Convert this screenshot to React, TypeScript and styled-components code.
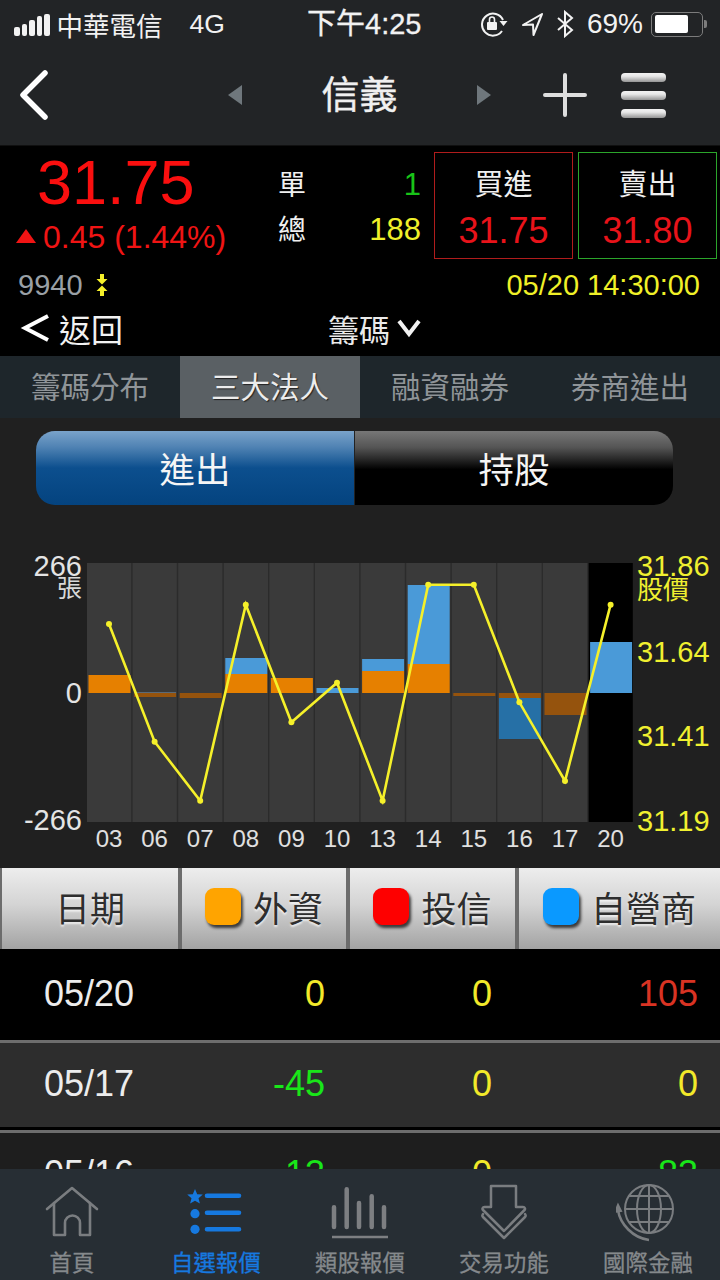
import React from 'react';
import styled, { createGlobalStyle } from 'styled-components';

const GlobalStyle = createGlobalStyle`
  html, body {
    margin: 0;
    padding: 0;
    background: #202020;
  }
  body {
    font-family: 'Liberation Sans', 'Noto Sans CJK TC', sans-serif;
  }
`;

const Page = styled.div`
  width: 720px;
  height: 1280px;
  display: flex;
  flex-direction: column;
  overflow: hidden;
  background: #202020;
`;

/* status bar */
const StatusBar = styled.div`
  height: 48px;
  flex: none;
  display: flex;
  align-items: center;
  background: #222426;
  color: #f2f2f2;
  font-size: 26.5px;
  padding: 0 17px 0 14px;
  position: relative;
`;

const SignalBars = styled.div`
  display: flex;
  align-items: flex-end;
  gap: 2px;
  height: 24px;
  margin-right: 7px;
`;

const SignalBar = styled.span<{ $h: number }>`
  width: 5.5px;
  height: ${(p) => p.$h}px;
  background: #f2f2f2;
  border-radius: 2px;
`;

const Carrier = styled.span`
  width: 133px;
`;

const Clock = styled.span`
  position: absolute;
  left: 307px;
  top: 3px;
  font-size: 29px;
  line-height: 42px;
  -webkit-text-stroke: 0.3px #f2f2f2;
`;

const StatusRight = styled.div`
  margin-left: auto;
  display: flex;
  align-items: center;
`;

const LocationIcon = styled.svg`
  margin-left: 12px;
`;

const BluetoothIcon = styled.svg`
  margin-left: 12px;
`;

const BatteryPercent = styled.span`
  margin-left: 13px;
  font-size: 28px;
`;

const Battery = styled.div`
  width: 52px;
  height: 25px;
  box-sizing: border-box;
  border: 1.5px solid #7c7c7c;
  border-radius: 5px;
  padding: 2.5px;
  margin-left: 8px;
  position: relative;
  &::after {
    content: '';
    position: absolute;
    right: -5px;
    top: 7px;
    width: 3px;
    height: 8px;
    background: #7c7c7c;
    border-radius: 0 2px 2px 0;
  }
`;

const BatteryFill = styled.div`
  width: 33px;
  height: 100%;
  background: #fff;
  border-radius: 2px;
`;

/* nav bar */
const NavBar = styled.div`
  height: 98px;
  flex: none;
  display: flex;
  align-items: center;
  background: #222426;
  padding-bottom: 3px;
  box-sizing: border-box;
  border-bottom: 1px solid #101010;
`;

const NavBack = styled.svg`
  margin-left: 18px;
  margin-right: 178px;
  width: 32px;
  height: 50px;
`;

const NavArrow = styled.div<{ $right?: boolean }>`
  width: 0;
  height: 0;
  border-top: 10px solid transparent;
  border-bottom: 10px solid transparent;
  ${(p) =>
    p.$right
      ? 'border-left: 14px solid #6f777c;'
      : 'border-right: 14px solid #6f777c;'}
`;

const NavTitle = styled.div`
  width: 235px;
  text-align: center;
  font-size: 38px;
  line-height: 50px;
  color: #f0f0f0;
  -webkit-text-stroke: 0.4px #f0f0f0;
`;

const PlusIcon = styled.svg`
  width: 44px;
  height: 44px;
  margin-left: 52px;
`;

const Hamburger = styled.div`
  width: 45px;
  margin-left: 34px;
  display: flex;
  flex-direction: column;
  gap: 9px;
`;

const HamburgerBar = styled.div`
  height: 9px;
  border-radius: 4px;
  background: linear-gradient(#f2f2f2 0%, #e8e8e8 35%, #949494 100%);
`;

/* quote panel */
const QuotePanel = styled.div`
  height: 210px;
  flex: none;
  background: #000;
  display: flex;
  flex-direction: column;
  box-sizing: border-box;
  padding-top: 6px;
`;

const QuoteTop = styled.div`
  display: flex;
  height: 107px;
`;

const PriceBlock = styled.div`
  width: 278px;
  flex: none;
  box-sizing: border-box;
  padding-left: 16px;
  color: #fa0f0f;
`;

const BigPrice = styled.div`
  font-size: 63px;
  line-height: 66px;
  margin: -3px 0 0 21px;
`;

const ChangeRow = styled.div`
  display: flex;
  align-items: center;
  font-size: 32px;
  line-height: 38px;
  margin-top: 3px;
  gap: 7px;
  color: #f01414;
`;

const UpTriangle = styled.span`
  width: 0;
  height: 0;
  border-left: 10px solid transparent;
  border-right: 10px solid transparent;
  border-bottom: 14px solid #f01414;
  margin-top: -2px;
`;

const StatsBlock = styled.div`
  width: 143px;
  flex: none;
  display: flex;
  flex-direction: column;
  gap: 7px;
  padding-top: 12px;
`;

const StatRow = styled.div`
  display: flex;
  align-items: center;
  justify-content: space-between;
  height: 38px;
`;

const StatLabel = styled.span`
  font-size: 28px;
  color: #f0f0f0;
`;

const StatValue = styled.span<{ $color: string }>`
  font-size: 31px;
  margin-top: 3px;
  color: ${(p) => p.$color};
`;

const QuoteBox = styled.div<{ $border: string; $gap: number }>`
  width: 139px;
  height: 107px;
  flex: none;
  box-sizing: border-box;
  border: 1.5px solid ${(p) => p.$border};
  margin-left: ${(p) => p.$gap}px;
  display: flex;
  flex-direction: column;
  align-items: center;
  padding-top: 12px;
`;

const BoxLabel = styled.div`
  font-size: 29px;
  line-height: 40px;
  color: #f0f0f0;
`;

const BoxPrice = styled.div`
  font-size: 36px;
  line-height: 42px;
  margin-top: 5px;
  color: #e8131a;
`;

const MetaRow = styled.div`
  display: flex;
  align-items: center;
  height: 36px;
  margin-top: 8px;
  padding: 0 18px;
  font-size: 29px;
`;

const StockCode = styled.span`
  color: #9aa0a6;
`;

const TickIcon = styled.svg`
  width: 12px;
  height: 22px;
  margin-left: 13px;
`;

const TimeStamp = styled.span`
  margin-left: auto;
  margin-right: 2px;
  color: #f0f028;
`;

const ReturnRow = styled.div`
  display: flex;
  align-items: center;
  height: 48px;
  margin-top: 1px;
`;

const ReturnChevron = styled.svg`
  width: 30px;
  height: 30px;
  margin-left: 20px;
`;

const ReturnLabel = styled.span`
  margin-left: 9px;
  font-size: 32px;
  color: #f2f2f2;
`;

const PickerLabel = styled.span`
  margin-left: 205px;
  font-size: 31px;
  color: #eaeaea;
`;

const PickerChevron = styled.svg`
  width: 26px;
  height: 20px;
  margin-left: 6px;
`;

/* tabs */
const TabStrip = styled.div`
  height: 62px;
  flex: none;
  display: grid;
  grid-template-columns: repeat(4, 180px);
  background: #1e262b;
`;

const Tab = styled.div<{ $active?: boolean }>`
  display: flex;
  align-items: center;
  justify-content: center;
  padding-bottom: 4px;
  font-size: 29.5px;
  color: ${(p) => (p.$active ? '#ececec' : '#8f9498')};
  background: ${(p) => (p.$active ? '#5a6064' : 'transparent')};
  text-shadow: ${(p) => (p.$active ? '1px 1px 1px #222' : 'none')};
`;

/* segment */
const Content = styled.div`
  flex: 1;
  min-height: 0;
  overflow: hidden;
  background: #202020;
  padding-top: 13px;
`;

const Segment = styled.div`
  width: 637px;
  height: 74px;
  margin-left: 36px;
  display: flex;
  border-radius: 19px;
  overflow: hidden;
`;

const SegmentItem = styled.div<{ $active?: boolean }>`
  flex: ${(p) => (p.$active ? '0 0 318px' : '1')};
  display: flex;
  align-items: center;
  justify-content: center;
  padding-bottom: 2px;
  font-size: 35.5px;
  color: #f5f5f5;
  border-left: ${(p) => (p.$active ? 'none' : '1.5px solid #222')};
  background: ${(p) =>
    p.$active
      ? 'linear-gradient(#7aa3ca 0%, #4f82b3 22%, #0c4f8e 50%, #04437f 100%)'
      : 'linear-gradient(#777 0%, #555 22%, #000 52%, #000 100%)'};
`;

const ChartBox = styled.svg`
  display: block;
  width: 720px;
  height: 320px;
  margin-top: 40px;
`;

/* table */
const TableHead = styled.div`
  display: grid;
  grid-template-columns: 176px 164px 165px 1fr;
  column-gap: 4px;
  height: 81px;
  margin-top: 3px;
  padding-left: 2px;
  background: #6c6c6c;
`;

const HeadCell = styled.div`
  display: flex;
  align-items: center;
  justify-content: center;
  gap: 12px;
  padding-bottom: 5px;
  font-size: 35px;
  color: #2e2e2e;
  text-shadow: 0 2px 2px rgba(255, 255, 255, 0.75);
  background: linear-gradient(#ededed 0%, #d4d4d4 45%, #a3a3a3 100%);
`;

const Swatch = styled.span<{ $color: string }>`
  width: 36px;
  height: 37px;
  border-radius: 9px;
  background: ${(p) => p.$color};
  box-shadow: 2px 3px 3px rgba(0, 0, 0, 0.7);
`;

const Row = styled.div<{ $bg: string; $first?: boolean }>`
  display: grid;
  grid-template-columns: 178px 147px 167px 206px;
  align-items: center;
  height: ${(p) => (p.$first ? '91px' : '90px')};
  box-sizing: border-box;
  padding-bottom: ${(p) => (p.$first ? '2px' : '6px')};
  font-size: 36px;
  background: ${(p) => p.$bg};
  border-top: ${(p) => (p.$first ? 'none' : '3px solid #6d6d6d')};
  box-shadow: ${(p) => (p.$first ? 'none' : 'inset 0 -3px 0 #000')};
`;

const DateCell = styled.span`
  text-align: center;
  color: #ececec;
`;

const ValueCell = styled.span<{ $color: string }>`
  text-align: right;
  color: ${(p) => p.$color};
`;

/* bottom tabs */
const BottomBar = styled.div`
  height: 111px;
  flex: none;
  display: grid;
  grid-template-columns: repeat(5, 144px);
  background: #272e34;
`;

const BottomItem = styled.div<{ $active?: boolean }>`
  display: flex;
  flex-direction: column;
  align-items: center;
  padding-top: 15px;
  color: ${(p) => (p.$active ? '#1679e0' : '#85898c')};
`;

const BottomIcon = styled.svg`
  width: 64px;
  height: 60px;
  flex: none;
`;

const BottomLabel = styled.span`
  font-size: 22.3px;
  line-height: 30px;
  margin-top: 5px;
  letter-spacing: 0.2px;
  -webkit-text-stroke: 0.3px currentColor;
`;

const columns = [
  { label: '03', bars: [{ y: 675, h: 18, c: '#e68000' }] },
  { label: '06', bars: [{ y: 692, h: 1, c: '#5a6a78' }, { y: 693, h: 4, c: '#95530d' }] },
  { label: '07', bars: [{ y: 693, h: 5, c: '#95530d' }] },
  { label: '08', bars: [{ y: 658, h: 16, c: '#4a9ad8' }, { y: 674, h: 19, c: '#e68000' }] },
  { label: '09', bars: [{ y: 678, h: 15, c: '#e68000' }] },
  { label: '10', bars: [{ y: 688, h: 5, c: '#4a9ad8' }] },
  { label: '13', bars: [{ y: 659, h: 12, c: '#4a9ad8' }, { y: 671, h: 22, c: '#e68000' }] },
  { label: '14', bars: [{ y: 585, h: 79, c: '#4a9ad8' }, { y: 664, h: 29, c: '#e68000' }] },
  { label: '15', bars: [{ y: 693, h: 3, c: '#95530d' }] },
  { label: '16', bars: [{ y: 693, h: 5, c: '#95530d' }, { y: 698, h: 41, c: '#2670a6' }] },
  { label: '17', bars: [{ y: 693, h: 22, c: '#95530d' }] },
  { label: '20', bars: [{ y: 642, h: 51, c: '#4a9ad8' }] },
];

const pricePoints = [624, 741.7, 800.7, 604.7, 722.3, 682.7, 800.7, 584.7, 584.7, 702.3, 781, 604.7];

const leftAxis = [
  { text: '266', y: 576 },
  { text: '0', y: 702.5 },
  { text: '-266', y: 830 },
];

const rightAxis = [
  { text: '31.86', y: 576 },
  { text: '31.64', y: 661.5 },
  { text: '31.41', y: 746 },
  { text: '31.19', y: 830.5 },
];

const rows = [
  { date: '05/20', a: ['0', '#f2e92a'], b: ['0', '#f2e92a'], c: ['105', '#d93323'], bg: '#000' },
  { date: '05/17', a: ['-45', '#19e619'], b: ['0', '#f2e92a'], c: ['0', '#f2e92a'], bg: '#2d2d2d' },
  { date: '05/16', a: ['-13', '#19e619'], b: ['0', '#f2e92a'], c: ['-83', '#19e619'], bg: '#1e1e1e' },
];

function colX(i: number) {
  return 87 + i * 45.6;
}

function Chart() {
  const line = pricePoints.map((y, i) => `${colX(i) + 22},${y}`).join(' ');
  return (
    <ChartBox viewBox="0 545 720 320">
      <rect x={87} y={563} width={502} height={259} fill="#2b2b2b" />
      {columns.map((col, i) => (
        <g key={col.label}>
          <rect x={colX(i)} y={563} width={44.2} height={259} fill={i === 11 ? '#000' : '#3a3a3a'} />
          {col.bars.map((b) => (
            <rect key={b.y} x={colX(i) + 1.5} y={b.y} width={42} height={b.h} fill={b.c} />
          ))}
          <text x={colX(i) + 22} y={847} fontSize={24} fill="#e0e0e0" textAnchor="middle">
            {col.label}
          </text>
        </g>
      ))}
      <polyline points={line} fill="none" stroke="#f5f02a" strokeWidth={2.6} />
      {pricePoints.map((y, i) => (
        <circle key={i} cx={colX(i) + 22} cy={y} r={3} fill="#f5f02a" />
      ))}
      {leftAxis.map((t) => (
        <text key={t.text} x={82} y={t.y} fontSize={29} fill="#e4e4e4" textAnchor="end">
          {t.text}
        </text>
      ))}
      <text x={82} y={597} fontSize={25} fill="#d8d8d8" textAnchor="end">
        張
      </text>
      {rightAxis.map((t) => (
        <text key={t.text} x={637} y={t.y} fontSize={29} fill="#f0f030">
          {t.text}
        </text>
      ))}
      <text x={637} y={599} fontSize={26} fill="#f0f030">
        股價
      </text>
    </ChartBox>
  );
}

export default function App() {
  return (
    <Page>
      <GlobalStyle />
      <StatusBar>
        <SignalBars>
          <SignalBar $h={9} />
          <SignalBar $h={12} />
          <SignalBar $h={16} />
          <SignalBar $h={20} />
          <SignalBar $h={22} />
        </SignalBars>
        <Carrier>中華電信</Carrier>
        <span>4G</span>
        <Clock>下午4:25</Clock>
        <StatusRight>
          <svg width="28" height="26" viewBox="0 0 28 26" fill="none" stroke="#f2f2f2">
            <path d="M22 20a11 11 0 1 1 1-11" strokeWidth="2" />
            <path d="M19.500 10l4 5 4-5z" fill="#f2f2f2" stroke="none" />
            <rect x="7" y="11" width="10" height="8" rx="1" fill="#f2f2f2" stroke="none" />
            <path d="M9.500 11V8.500a2.500 2.500 0 0 1 5 0V11" strokeWidth="1.6" />
          </svg>
          <LocationIcon width="24" height="26" viewBox="0 0 24 26" fill="none" stroke="#f2f2f2" strokeWidth="2">
            <path d="M22 3L3 14l10-.5.500 10.500z" strokeLinejoin="round" />
          </LocationIcon>
          <BluetoothIcon width="18" height="28" viewBox="0 0 18 28" fill="none" stroke="#f2f2f2" strokeWidth="2">
            <path d="M2 8l14 12-7 6V2l7 6L2 20" />
          </BluetoothIcon>
          <BatteryPercent>69%</BatteryPercent>
          <Battery>
            <BatteryFill />
          </Battery>
        </StatusRight>
      </StatusBar>

      <NavBar>
        <NavBack viewBox="0 0 32 50" fill="none" stroke="#fff" strokeWidth="5.5" strokeLinecap="round" strokeLinejoin="round">
          <path d="M27 3L5 25l22 22" />
        </NavBack>
        <NavArrow />
        <NavTitle>信義</NavTitle>
        <NavArrow $right />
        <PlusIcon viewBox="0 0 44 44" stroke="#dedede" strokeWidth="4" strokeLinecap="round">
          <path d="M22 2v40M2 22h40" />
        </PlusIcon>
        <Hamburger>
          <HamburgerBar />
          <HamburgerBar />
          <HamburgerBar />
        </Hamburger>
      </NavBar>

      <QuotePanel>
        <QuoteTop>
          <PriceBlock>
            <BigPrice>31.75</BigPrice>
            <ChangeRow>
              <UpTriangle />
              <span>0.45 (1.44%)</span>
            </ChangeRow>
          </PriceBlock>
          <StatsBlock>
            <StatRow>
              <StatLabel>單</StatLabel>
              <StatValue $color="#18c418">1</StatValue>
            </StatRow>
            <StatRow>
              <StatLabel>總</StatLabel>
              <StatValue $color="#f0f02a">188</StatValue>
            </StatRow>
          </StatsBlock>
          <QuoteBox $border="#b01c1c" $gap={13}>
            <BoxLabel>買進</BoxLabel>
            <BoxPrice>31.75</BoxPrice>
          </QuoteBox>
          <QuoteBox $border="#2ba52b" $gap={5}>
            <BoxLabel>賣出</BoxLabel>
            <BoxPrice>31.80</BoxPrice>
          </QuoteBox>
        </QuoteTop>
        <MetaRow>
          <StockCode>9940</StockCode>
          <TickIcon viewBox="0 0 12 22" fill="#f5f02a">
            <path d="M4 0h4v5h3.500L6 10.500 .5 5H4zM6 11.500L11.500 17H8v5H4v-5H.5z" />
          </TickIcon>
          <TimeStamp>05/20 14:30:00</TimeStamp>
        </MetaRow>
        <ReturnRow>
          <ReturnChevron viewBox="0 0 30 30" fill="none" stroke="#fff" strokeWidth="4">
            <path d="M28 3L5 15l23 12" />
          </ReturnChevron>
          <ReturnLabel>返回</ReturnLabel>
          <PickerLabel>籌碼</PickerLabel>
          <PickerChevron viewBox="0 0 26 20" fill="none" stroke="#f2f2f2" strokeWidth="4">
            <path d="M3 3l10 13L23 3" />
          </PickerChevron>
        </ReturnRow>
      </QuotePanel>

      <TabStrip>
        <Tab>籌碼分布</Tab>
        <Tab $active>三大法人</Tab>
        <Tab>融資融券</Tab>
        <Tab>券商進出</Tab>
      </TabStrip>

      <Content>
        <Segment>
          <SegmentItem $active>進出</SegmentItem>
          <SegmentItem>持股</SegmentItem>
        </Segment>
        <Chart />
        <TableHead>
          <HeadCell>日期</HeadCell>
          <HeadCell>
            <Swatch $color="#ffa400" />
            外資
          </HeadCell>
          <HeadCell>
            <Swatch $color="#fe0000" />
            投信
          </HeadCell>
          <HeadCell>
            <Swatch $color="#0a99ff" />
            自營商
          </HeadCell>
        </TableHead>
        {rows.map((r, i) => (
          <Row key={r.date} $bg={r.bg} $first={i === 0}>
            <DateCell>{r.date}</DateCell>
            <ValueCell $color={r.a[1]}>{r.a[0]}</ValueCell>
            <ValueCell $color={r.b[1]}>{r.b[0]}</ValueCell>
            <ValueCell $color={r.c[1]}>{r.c[0]}</ValueCell>
          </Row>
        ))}
      </Content>

      <BottomBar>
        <BottomItem>
          <BottomIcon viewBox="0 0 64 60" fill="none" stroke="#7a7d80" strokeWidth="2.6" strokeLinecap="round" strokeLinejoin="round">
            <path d="M7 25L32 4l25 21" />
            <path d="M14 19v32h11V39a7.500 7.500 0 0 1 15 0v12h10V19" />
          </BottomIcon>
          <BottomLabel>首頁</BottomLabel>
        </BottomItem>
        <BottomItem $active>
          <BottomIcon viewBox="0 0 64 60" fill="#1679e0" stroke="none">
            <path d="M11 5l2.200 5.200 5.600.4-4.300 3.600 1.400 5.400L11 16.700l-4.900 2.900 1.400-5.400-4.300-3.600 5.600-.4z" />
            <circle cx="11" cy="29.700" r="4.600" />
            <circle cx="11" cy="45.300" r="4.600" />
            <g stroke="#1679e0" strokeWidth="4.600" strokeLinecap="round">
              <path d="M23 11.700h32M23 28.700h32M23 45.300h32" />
            </g>
          </BottomIcon>
          <BottomLabel>自選報價</BottomLabel>
        </BottomItem>
        <BottomItem>
          <BottomIcon viewBox="0 0 64 60" fill="none" stroke="#7d7f82" strokeLinecap="round">
            <path d="M6 23.300V43M18.700 5.300V43M31 19V43M43.700 12.300V43M56 23.300V43" strokeWidth="4.500" />
            <path d="M4 53h56" strokeWidth="2.500" strokeLinecap="butt" />
          </BottomIcon>
          <BottomLabel>類股報價</BottomLabel>
        </BottomItem>
        <BottomItem>
          <BottomIcon viewBox="0 0 64 60" fill="none" stroke="#7a7d80" strokeWidth="2.500" strokeLinejoin="round" strokeLinecap="round">
            <path d="M19 2h25v21h7c2 0 2.500 2 1.500 3L32 47 11 26c-1-1-.5-3 1.500-3H19z" />
            <path d="M11 30l-.5 1c-.5 1 0 1.500.5 2l21 21 21-21c.5-.5 1-1 .5-2l-.5-1" />
          </BottomIcon>
          <BottomLabel>交易功能</BottomLabel>
        </BottomItem>
        <BottomItem>
          <BottomIcon viewBox="0 0 64 60" fill="none" stroke="#7a7d80" strokeWidth="2">
            <circle cx="33" cy="25" r="24" />
            <ellipse cx="33" cy="25" rx="12" ry="24" />
            <path d="M33 1v48M9 25h48M13 12h40M13 38h40" />
            <path d="M2 26c2 14 15 28 31 30" strokeWidth="2.500" />
            <path d="M2 21l-3 7 6-1z" fill="#7a7d80" />
          </BottomIcon>
          <BottomLabel>國際金融</BottomLabel>
        </BottomItem>
      </BottomBar>
    </Page>
  );
}
